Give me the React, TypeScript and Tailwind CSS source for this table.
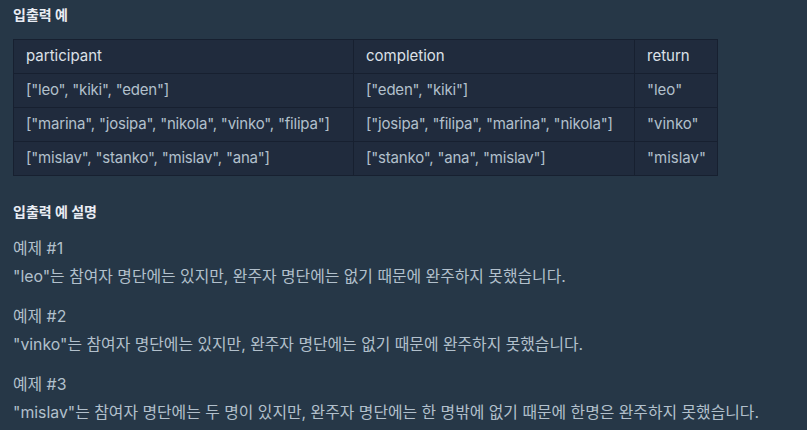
const rows = [
  {
    participant: '["leo", "kiki", "eden"]',
    completion: '["eden", "kiki"]',
    ret: '"leo"',
  },
  {
    participant: '["marina", "josipa", "nikola", "vinko", "filipa"]',
    completion: '["josipa", "filipa", "marina", "nikola"]',
    ret: '"vinko"',
  },
  {
    participant: '["mislav", "stanko", "mislav", "ana"]',
    completion: '["stanko", "ana", "mislav"]',
    ret: '"mislav"',
  },
]

const examples = [
  {
    title: "예제 #1",
    text: '"leo"는 참여자 명단에는 있지만, 완주자 명단에는 없기 때문에 완주하지 못했습니다.',
  },
  {
    title: "예제 #2",
    text: '"vinko"는 참여자 명단에는 있지만, 완주자 명단에는 없기 때문에 완주하지 못했습니다.',
  },
  {
    title: "예제 #3",
    text: '"mislav"는 참여자 명단에는 두 명이 있지만, 완주자 명단에는 한 명밖에 없기 때문에 한명은 완주하지 못했습니다.',
  },
]

export default function App() {
  return (
    <div
      className="h-[430px] w-[807px] overflow-hidden bg-[#263747] px-[13px] pt-[5px]"
      style={{ fontFamily: 'Inter, "Noto Sans CJK KR", sans-serif' }}
    >
      <h5 className="text-[14px] font-bold leading-[20px] text-[#e9ecf3]">입출력 예</h5>
      <table className="mt-[14px] w-[705px] table-fixed border-collapse whitespace-nowrap bg-[#202b3d] text-[15px] text-[#b2c0cc]">
        <thead>
          <tr className="h-[34px]">
            <th className="w-[340px] border border-[#172030] px-[12px] text-left font-normal text-[#dce1e8]">participant</th>
            <th className="w-[281px] border border-[#172030] px-[12px] text-left font-normal text-[#dce1e8]">completion</th>
            <th className="border border-[#172030] px-[12px] text-left font-normal text-[#dce1e8]">return</th>
          </tr>
        </thead>
        <tbody>
          {rows.map((r) => (
            <tr key={r.ret} className="h-[34px]">
              <td className="border border-[#172030] px-[12px] tracking-[-0.2px]">{r.participant}</td>
              <td className="border border-[#172030] px-[12px] tracking-[-0.2px]">{r.completion}</td>
              <td className="border border-[#172030] px-[12px]">{r.ret}</td>
            </tr>
          ))}
        </tbody>
      </table>
      <h5 className="mt-[26px] text-[14px] font-bold leading-[20px] text-[#e9ecf3]">입출력 예 설명</h5>
      <div className="mt-[13px] text-[15.85px] text-[#b2c0cc]">
        {examples.map((e) => (
          <div key={e.title} className="mb-[13px]">
            <p className="leading-[28px]">{e.title}</p>
            <p className="leading-[27px]">{e.text}</p>
          </div>
        ))}
      </div>
    </div>
  )
}
